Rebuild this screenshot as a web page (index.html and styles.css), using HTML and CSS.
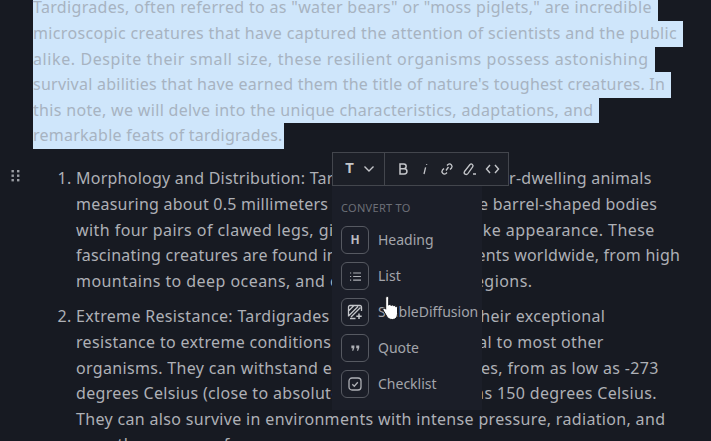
FILE: index.html
```html
<!DOCTYPE html>
<html lang="en">
<head>
<meta charset="utf-8">
<title>Tardigrades note</title>
<link rel="stylesheet" href="styles.css">
</head>
<body>
<main class="page">
  <section class="intro">
    <span class="sel">Tardigrades, often referred to as "water bears" or "moss piglets," are incredible</span>
    <span class="sel">microscopic creatures that have captured the attention of scientists and the public</span>
    <span class="sel widest">alike. Despite their small size, these resilient organisms possess astonishing</span>
    <span class="sel tight">survival abilities that have earned them the title of nature's toughest creatures. In</span>
    <span class="sel">this note, we will delve into the unique characteristics, adaptations, and</span>
    <span class="sel last tight">remarkable feats of tardigrades.</span>
  </section>
  <div class="block">
    <svg class="grip" width="10" height="14" viewBox="0 0 10 14"><g fill="#9a9da3"><rect x="0.5" y="1" width="2.4" height="2.4"/><rect x="6" y="1" width="2.4" height="2.4"/><rect x="0.5" y="5.5" width="2.4" height="2.4"/><rect x="6" y="5.5" width="2.4" height="2.4"/><rect x="0.5" y="10" width="2.4" height="2.4"/><rect x="6" y="10" width="2.4" height="2.4"/></g></svg>
    <ol class="list">
      <li>
        <span class="line tight">Morphology and Distribution: Tardigrades are tiny, water-dwelling animals</span>
        <span class="line tight">measuring about 0.5 millimeters in length. They have barrel-shaped bodies</span>
        <span class="line wide">with four pairs of clawed legs, giving them a bear-like appearance. These</span>
        <span class="line tight">fascinating creatures are found in various environments worldwide, from high</span>
        <span class="line wide">mountains to deep oceans, and even in the polar regions.</span>
      </li>
      <li>
        <span class="line">Extreme Resistance: Tardigrades are renowned for their exceptional</span>
        <span class="line">resistance to extreme conditions that would be lethal to most other</span>
        <span class="line">organisms. They can withstand extreme temperatures, from as low as -273</span>
        <span class="line">degrees Celsius (close to absolute zero), to as high as 150 degrees Celsius.</span>
        <span class="line">They can also survive in environments with intense pressure, radiation, and</span>
        <span class="line">even the vacuum of space.</span>
      </li>
    </ol>
  </div>
</main>

<div class="popover">
  <div class="toolbar">
    <div class="tb-type">
      <span class="tb-t">T</span>
      <svg width="12" height="8" viewBox="0 0 12 8" fill="none" stroke="#c4c6ca" stroke-width="1.4"><path d="M1.5 1.5 6 6l4.500-4.500"/></svg>
    </div>
    <div class="tb-tools">
      <svg width="14" height="14" viewBox="0 0 14 14" fill="none" stroke="#c4c6ca" stroke-width="1.500"><path d="M4 2h3.800a2.300 2.300 0 0 1 0 4.700H4zM4 6.700h4.300a2.600 2.600 0 0 1 0 5.300H4z"/></svg>
      <svg width="14" height="14" viewBox="0 0 14 14" fill="none" stroke="#c4c6ca" stroke-width="1.300"><path d="M8.600 2v.8M7.600 5.400 6 12"/></svg>
      <svg width="14" height="14" viewBox="0 0 14 14" fill="none" stroke="#c4c6ca" stroke-width="1.300"><path d="M6 8.500 8.500 5M7 3.500l1-1a2.500 2.500 0 0 1 3.500 3.500l-1.500 1.500M7 10.500l-1 1A2.500 2.500 0 0 1 2.500 8L4 6.500"/></svg>
      <svg width="15" height="14" viewBox="0 0 15 14" fill="none" stroke="#c4c6ca" stroke-width="1.300"><path d="M2.500 9.500 8 2.500a1.800 1.800 0 0 1 2.800 2.200L6 11.500a2 2 0 0 1-3.500-2zM11 12h3"/></svg>
      <svg width="15" height="14" viewBox="0 0 15 14" fill="none" stroke="#c4c6ca" stroke-width="1.400"><path d="M5 3 1.500 7 5 11M10 3l3.500 4-3.500 4"/></svg>
    </div>
  </div>
  <div class="panel">
    <div class="panel-title">CONVERT TO</div>
    <div class="item">
      <span class="ico"><span class="ico-h">H</span></span><span class="label">Heading</span>
    </div>
    <div class="item">
      <span class="ico"><svg width="13" height="11" viewBox="0 0 16 14" fill="none" stroke="#aeb0b5" stroke-width="1.500"><path d="M5 2.500h10M5 7h10M5 11.500h10M1 2.500h1.500M1 7h1.500M1 11.500h1.500"/></svg></span><span class="label">List</span>
    </div>
    <div class="item">
      <span class="ico"><svg width="16" height="16" viewBox="0 0 16 16" fill="none" stroke="#c4c6ca" stroke-width="1.300"><path d="M8 1.500H3A1.500 1.500 0 0 0 1.500 3v9.500M14.500 7V3A1.500 1.500 0 0 0 13 1.500L8 1.500M1.500 7 7 1.500M1.500 12 11 2.500M4 13 13.500 3.500M8.500 14.500H3"/><path d="M12 9.500v5.500M9.300 12.200h5.400" stroke-width="1.500"/></svg></span><span class="label">StableDiffusion</span>
    </div>
    <div class="item">
      <span class="ico"><svg width="9" height="6" viewBox="0 0 12 8" fill="#aeb0b5"><path d="M0.500 0.500h4v3.200L3 7.500H1.500l.8-3.300H.5zM7 0.500h4v3.200L9.500 7.500H8l.8-3.300H7z"/></svg></span><span class="label">Quote</span>
    </div>
    <div class="item">
      <span class="ico"><svg width="14" height="14" viewBox="0 0 14 14" fill="none" stroke="#aeb0b5" stroke-width="1.300"><rect x="1" y="1" width="12" height="12" rx="3"/><path d="m4.300 7.200 2 2 3.500-4"/></svg></span><span class="label">Checklist</span>
    </div>
  </div>
</div>

<svg class="hand" width="18" height="26" viewBox="0 0 18 26"><path d="M5.200 1.500c1 0 1.500.7 1.500 1.700v7c.3-1.200 2.300-1 2.500.4.300-1.100 2.200-.9 2.400.5.400-1 2.100-.7 2.200.7.200-.5 1.700-.3 1.700 1v6c0 3.500-1.800 5.700-5 5.700-3 0-4.500-1-5.800-3.300L1 15c-.7-1.400.8-2.600 2-1.600l.7.800V3.200c0-1 .5-1.700 1.500-1.700z" fill="#fff" stroke="#15171d" stroke-width="1"/></svg>
</body>
</html>
```

FILE: styles.css
```css
* { box-sizing: border-box; }
html, body { margin: 0; height: 100%; }
body {
  background: #171a22;
  overflow: hidden;
  font-family: "Noto Sans", sans-serif;
  font-size: 16px;
  line-height: 25.6px;
  color: #aeb0b6;
}
.page { height: 441px; overflow: hidden; padding: 0 0 0 33px; }
.intro { margin-top: -4.6px; letter-spacing: .33px; }
.sel {
  display: block;
  width: fit-content;
  height: 25.6px;
  padding-right: 6px;
  background: #cfe6fb;
  color: #a7b3c1;
  white-space: nowrap;
}
.sel.last { padding-right: 1px; }
.tight { letter-spacing: .24px; }
.wide { letter-spacing: .44px; }
.widest { letter-spacing: .6px; }
.block { position: relative; margin-top: 17.4px; letter-spacing: .33px; }
.grip { position: absolute; left: -22px; top: 3px; }
.list { margin: 0; padding: 0 0 0 43px; }
.list li { margin-bottom: 10px; }
.list li::marker { color: #aeb0b6; }
.line { display: block; white-space: nowrap; }

.popover { position: absolute; left: 332px; top: 152px; letter-spacing: 0; }
.toolbar {
  display: flex;
  width: 177px;
  height: 34px;
  background: #1c1f27;
  border: 1px solid #43464d;
}
.tb-type {
  display: flex;
  align-items: center;
  gap: 9px;
  width: 52px;
  padding-left: 12px;
  border-right: 1px solid #43464d;
}
.tb-t { font: 700 15px/1 "Liberation Mono", monospace; color: #c4c6ca; }
.tb-tools {
  display: flex;
  align-items: center;
  gap: 8px;
  padding-left: 11px;
}
.panel {
  width: 150px;
  height: 224px;
  padding: 15px 9px 0;
  background: #1b1e28;
}
.panel-title {
  font-size: 11px;
  line-height: 14px;
  letter-spacing: .3px;
  color: #6c6f77;
  margin-bottom: 7px;
}
.item {
  display: flex;
  align-items: center;
  gap: 9px;
  height: 36px;
  font-size: 14px;
  color: #a3a5ab;
  white-space: nowrap;
}
.ico {
  flex: none;
  display: flex;
  align-items: center;
  justify-content: center;
  width: 28px;
  height: 28px;
  border: 1px solid #565961;
  border-radius: 6px;
}
.ico-h { font-size: 12px; font-weight: 700; color: #b9bbc0; }
.hand { position: absolute; left: 382px; top: 295px; }
```
